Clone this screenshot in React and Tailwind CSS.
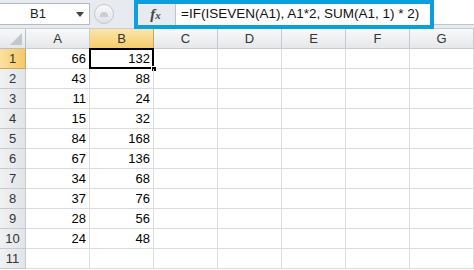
import React from 'react'

const colA = [66, 43, 11, 15, 84, 67, 34, 37, 28, 24]
const colB = [132, 88, 24, 32, 168, 136, 68, 76, 56, 48]
const letters = ['A', 'B', 'C', 'D', 'E', 'F', 'G']

function FormulaBar() {
  return (
    <div className="flex h-[29px] bg-[#e7eaee] border-b border-[#c9cdd2]">
      {/* Name box */}
      <div className="mt-[3px] flex h-[22px] w-[90px] items-center border border-l-0 border-[#b4bac2] bg-white">
        <span className="ml-[30px] text-[13px] text-[#222]">B1</span>
        <svg className="ml-auto mr-[5px]" width="8" height="5" viewBox="0 0 8 5">
          <path d="M0 0 H8 L4 5 Z" fill="#444" />
        </svg>
      </div>

      {/* grip */}
      <div className="ml-[4px] mt-[3px] flex h-[22px] w-[40px] items-center">
        <div className="flex h-[20px] w-[20px] items-center justify-center rounded-full border border-[#c3c7cc] bg-gradient-to-b from-[#f8f9fa] to-[#dfe2e6]">
          <div className="h-[5px] w-[8px] rounded-t-full bg-[#c9ccd0]" />
        </div>
      </div>

      {/* highlighted formula area */}
      <div className="flex h-[29px] w-[300px] border-4 border-[#0b9fdc]">
        <div className="flex w-[38px] items-center justify-center border-r border-[#c0c5cb] bg-[#e7eaee] pr-[2px]">
          <span className="font-['Liberation_Serif',serif] text-[15px] font-bold italic text-[#444]">
            f<span className="text-[11px]">x</span>
          </span>
        </div>
        <div className="flex flex-1 items-center bg-white pl-[5px]">
          <span className="whitespace-nowrap text-[13.5px] text-[#111]">=IF(ISEVEN(A1), A1*2, SUM(A1, 1) * 2)</span>
        </div>
      </div>
      <div className="h-[25px] flex-1 border-b border-[#c0c4c9] bg-white" />
    </div>
  )
}

function Grid() {
  return (
    <div className="grid grid-cols-[26px_repeat(7,64px)] auto-rows-[20px]">
      {/* corner */}
      <div className="relative border-b border-r border-[#b9bec5] bg-gradient-to-b from-[#f7f8f9] to-[#e4e7ea]">
        <svg className="absolute bottom-[3px] right-[3px]" width="12" height="12" viewBox="0 0 12 12">
          <path d="M12 0 V12 H0 Z" fill="#c3c7cc" />
        </svg>
      </div>
      {letters.map((l) => (
        <div
          key={l}
          className={
            l === 'B'
              ? 'flex items-center justify-center border-b border-r border-[#c9a957] bg-gradient-to-b from-[#fbe5ac] to-[#f6cc6a] text-[13px] text-[#333]'
              : 'flex items-center justify-center border-b border-r border-[#c7cbd1] bg-gradient-to-b from-[#f8f9fa] to-[#e5e8eb] text-[13px] text-[#333]'
          }
        >
          {l}
        </div>
      ))}

      {Array.from({ length: 11 }, (_, i) => (
        <React.Fragment key={i}>
          <div
            className={
              i === 0
                ? 'flex items-center justify-center border-b border-r border-[#c9a957] bg-gradient-to-r from-[#fbe0a0] to-[#f5c965] text-[13px] text-[#333]'
                : 'flex items-center justify-center border-b border-r border-[#c7cbd1] bg-gradient-to-r from-[#eff1f3] to-[#e2e5e8] text-[13px] text-[#333]'
            }
          >
            {i + 1}
          </div>
          <div className="flex items-center justify-end border-b border-r border-[#dadcdd] pr-[3px] text-[13px] text-black">
            {colA[i]}
          </div>
          <div className="relative flex items-center justify-end border-b border-r border-[#dadcdd] pr-[3px] text-[13px] text-black">
            {colB[i]}
            {i === 0 && (
              <>
                <div className="absolute -left-px -top-px bottom-[-1px] right-[-1px] border-2 border-black" />
                <div className="absolute bottom-[-4px] right-[-4px] h-[6px] w-[6px] border border-white bg-black" />
              </>
            )}
          </div>
          {[0, 1, 2, 3, 4].map((c) => (
            <div key={c} className="border-b border-r border-[#dadcdd]" />
          ))}
        </React.Fragment>
      ))}
    </div>
  )
}

export default function App() {
  return (
    <div className="h-[270px] w-[474px] overflow-hidden bg-white font-['Liberation_Sans',Arial,sans-serif]">
      <FormulaBar />
      <Grid />
    </div>
  )
}
